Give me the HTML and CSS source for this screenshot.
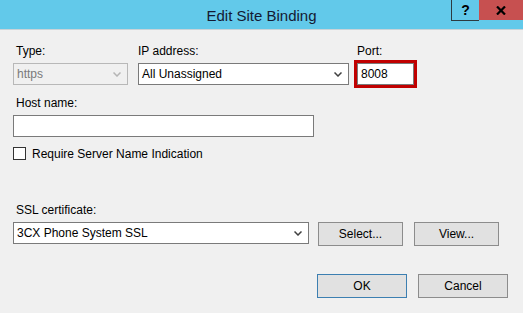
FILE: index.html
```html
<!DOCTYPE html>
<html lang="en">
<head>
    <meta charset="UTF-8">
    <title>Edit Site Binding</title>
    <link rel="stylesheet" href="styles.css">
</head>
<body>

    <div class="window">
        <div class="titlebar">
            <span class="title">Edit Site Binding</span>
            <div class="caption-btns">
                <span class="cap-help">?</span>
                <span class="cap-close">
                    <svg width="10" height="9" viewBox="0 0 10 9"><path d="M1 0.5 L9 8.5 M9 0.5 L1 8.5" stroke="#000" stroke-width="2.2"/></svg>
                </span>
            </div>
        </div>

        <div class="content">
            <!-- type / ip / port -->
            <div class="row">
                <div class="field field-type">
                    <label>Type:</label>
                    <div class="select disabled">
                        <span>https</span>
                        <svg class="chev" width="8" height="5" viewBox="0 0 8 5"><path d="M0.5 0.5 L4 4 L7.5 0.5" fill="none" stroke="#b5b5b5" stroke-width="1.5"/></svg>
                    </div>
                </div>
                <div class="field field-ip">
                    <label>IP address:</label>
                    <div class="select">
                        <span>All Unassigned</span>
                        <svg class="chev" width="8" height="5" viewBox="0 0 8 5"><path d="M0.5 0.5 L4 4 L7.5 0.5" fill="none" stroke="#404040" stroke-width="1.5"/></svg>
                    </div>
                </div>
                <div class="field field-port">
                    <label>Port:</label>
                    <div class="textbox port-box">8008</div>
                </div>
            </div>

            <div class="field field-host">
                <label>Host name:</label>
                <div class="textbox host-box"></div>
            </div>

            <div class="check-row">
                <span class="checkbox"></span>
                <span>Require Server Name Indication</span>
            </div>

            <div class="field field-ssl">
                <label>SSL certificate:</label>
                <div class="ssl-row">
                    <div class="select ssl-select">
                        <span>3CX Phone System SSL</span>
                        <svg class="chev" width="8" height="5" viewBox="0 0 8 5"><path d="M0.5 0.5 L4 4 L7.5 0.5" fill="none" stroke="#404040" stroke-width="1.5"/></svg>
                    </div>
                    <button class="btn btn-select">Select...</button>
                    <button class="btn btn-view">View...</button>
                </div>
            </div>

            <div class="footer">
                <button class="btn btn-wide btn-default">OK</button>
                <button class="btn btn-wide">Cancel</button>
            </div>
        </div>
    </div>

</body>
</html>
```

FILE: styles.css
```css
body {
    margin: 0;
    background-color: #f0f0f0;
    font-family: "Liberation Sans", Arial, sans-serif;
    font-size: 12px;
    color: #000;
}

.window {
    width: 523px;
    height: 313px;
    overflow: hidden;
}

.titlebar {
    position: relative;
    height: 29px;
    background-color: #62c9ea;
    border-bottom: 1px solid #c9d3d8;
    display: flex;
    align-items: center;
    justify-content: center;
}

.title {
    font-size: 15px;
    color: #141a33;
    padding-top: 1px;
}

.caption-btns {
    position: absolute;
    top: 0;
    right: 0;
    display: flex;
}

.cap-help {
    width: 27px;
    height: 20px;
    border-left: 1px solid #2d3a40;
    border-bottom: 1px solid #2d3a40;
    font-weight: bold;
    font-size: 14px;
    display: flex;
    align-items: center;
    justify-content: center;
}

.cap-close {
    width: 44px;
    height: 20px;
    background-color: #c75050;
    display: flex;
    align-items: center;
    justify-content: center;
}

.content {
    padding: 14px 0 0 13px;
}

.row {
    display: flex;
}

.field {
    display: flex;
    flex-direction: column;
}

.field label {
    line-height: 15px;
    height: 15px;
    padding-left: 3px;
    margin-bottom: 4px;
}

.field-type {
    width: 115px;
    margin-right: 10px;
}

.field-ip {
    width: 211px;
    margin-right: 8px;
}

.field-ip label {
    padding-left: 0;
}

.select,
.textbox {
    box-sizing: border-box;
    height: 22px;
    border: 1px solid #7a7a7a;
    background-color: #fff;
    display: flex;
    align-items: center;
    padding: 0 4px 0 3px;
}

.select span {
    flex: 1;
}

.select.disabled {
    background-color: #f0f0f0;
    border-color: #b8b8b8;
    color: #7a7a7a;
}

.chev {
    margin-right: 2px;
}

.port-box {
    width: 57px;
    outline: 3px solid #c00000;
    padding-left: 3px;
}

.field-port label {
    padding-left: 0;
}

.field-host {
    margin-top: 11px;
}

.host-box {
    width: 301px;
}

.check-row {
    display: flex;
    align-items: center;
    margin-top: 10px;
    height: 13px;
}

.checkbox {
    box-sizing: border-box;
    width: 13px;
    height: 13px;
    border: 1px solid #333;
    background-color: #fff;
    margin-right: 6px;
}

.field-ssl {
    margin-top: 43px;
}

.ssl-row {
    display: flex;
    align-items: flex-start;
}

.ssl-select {
    width: 296px;
    margin-right: 9px;
}

.btn {
    box-sizing: border-box;
    height: 24px;
    border: 1px solid #8c8c8c;
    background-color: #e1e1e1;
    font-family: inherit;
    font-size: 12px;
    color: #000;
    padding: 0;
}

.btn-select {
    width: 85px;
    margin-right: 11px;
}

.btn-view {
    width: 85px;
}

.footer {
    display: flex;
    margin-top: 28px;
    padding-left: 304px;
}

.btn-wide {
    width: 90px;
    margin-right: 11px;
}

.btn-default {
    border-color: #3c7fb1;
}
```
